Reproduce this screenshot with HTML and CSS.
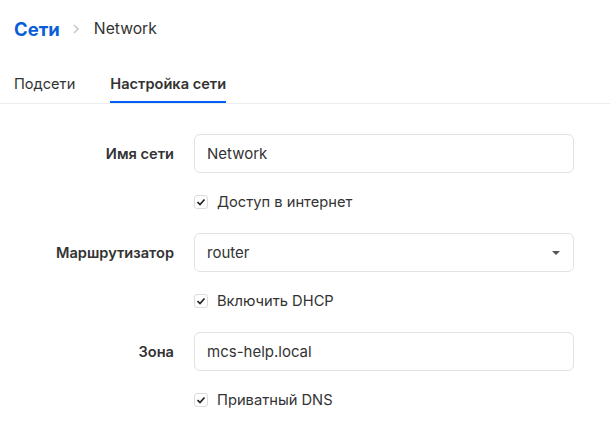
FILE: index.html
```html
<!DOCTYPE html>
<html lang="ru">
<head>
<meta charset="utf-8">
<link rel="stylesheet" href="styles.css">
</head>
<body>
<div class="page">
  <div class="breadcrumb">
    <span class="crumb-root">Сети</span>
    <svg class="crumb-sep" width="8" height="10" viewBox="0 0 8 10"><path d="M2 1l4 4-4 4" fill="none" stroke="#c8c8c8" stroke-width="1.6"/></svg>
    <span class="crumb-current">Network</span>
  </div>
  <div class="tabs">
    <div class="tab">Подсети</div>
    <div class="tab active">Настройка сети</div>
  </div>
  <form class="form">
    <div class="group">
      <label class="label">Имя сети</label>
      <div class="field"><span class="value">Network</span></div>
      <div class="check-row">
        <span class="checkbox"><svg width="10" height="8" viewBox="0 0 10 8"><path d="M1.5 4l2.5 2.5L8.5 1.5" fill="none" stroke="#222" stroke-width="1.7"/></svg></span>
        <span class="check-text">Доступ в интернет</span>
      </div>
    </div>
    <div class="group">
      <label class="label">Маршрутизатор</label>
      <div class="field select"><span class="value">router</span><span class="caret"></span></div>
      <div class="check-row">
        <span class="checkbox"><svg width="10" height="8" viewBox="0 0 10 8"><path d="M1.5 4l2.5 2.5L8.5 1.5" fill="none" stroke="#222" stroke-width="1.7"/></svg></span>
        <span class="check-text">Включить DHCP</span>
      </div>
    </div>
    <div class="group">
      <label class="label">Зона</label>
      <div class="field"><span class="value">mcs-help.local</span></div>
      <div class="check-row">
        <span class="checkbox"><svg width="10" height="8" viewBox="0 0 10 8"><path d="M1.5 4l2.5 2.5L8.5 1.5" fill="none" stroke="#222" stroke-width="1.7"/></svg></span>
        <span class="check-text">Приватный DNS</span>
      </div>
    </div>
  </form>
</div>
</body>
</html>
```

FILE: styles.css
```css
* { box-sizing: border-box; }
html, body { margin: 0; padding: 0; background: #fff; }
body {
  font-family: Inter, "Noto Sans", sans-serif;
  color: #333;
  width: 610px;
  height: 429px;
  overflow: hidden;
}
.breadcrumb {
  display: flex;
  align-items: center;
  height: 24px;
  margin-top: 17px;
  padding-left: 14px;
}
.crumb-root {
  font-size: 18.5px;
  font-weight: 700;
  color: #0a5fd8;
  line-height: 24px;
}
.crumb-sep { margin: 0 14px 0 12px; }
.crumb-current {
  font-size: 15.7px;
  color: #333;
  line-height: 24px;
}
.tabs {
  display: flex;
  gap: 35px;
  margin-top: 33px;
  padding-left: 14px;
  border-bottom: 1px solid #ececec;
}
.tab {
  font-size: 14.6px;
  line-height: 20px;
  padding-bottom: 7px;
  border-bottom: 2px solid transparent;
  color: #333;
}
.tab.active {
  font-weight: 600;
  border-bottom-color: #005ff9;
}
.form {
  padding: 30px 36px 0 14px;
  margin: 0;
}
.group {
  display: grid;
  grid-template-columns: 160px 1fr;
  column-gap: 20px;
  padding-bottom: 20px;
}
.label {
  font-size: 14.6px;
  font-weight: 600;
  color: #333;
  text-align: right;
  align-self: center;
}
.field {
  height: 39px;
  border: 1px solid #e2e2e2;
  border-radius: 6px;
  display: flex;
  align-items: center;
  padding: 0 13px 0 12px;
  font-size: 15px;
  color: #333;
}
.select { justify-content: space-between; }
.caret {
  width: 0;
  height: 0;
  border-left: 4px solid transparent;
  border-right: 4px solid transparent;
  border-top: 4px solid #555;
}
.check-row {
  grid-column: 2;
  display: flex;
  align-items: center;
  height: 22px;
  margin-top: 18px;
}
.checkbox {
  width: 14px;
  height: 14px;
  border: 1px solid #dcdcdc;
  border-radius: 3px;
  display: flex;
  align-items: center;
  justify-content: center;
  margin-right: 9px;
}
.check-text {
  font-size: 14.7px;
  color: #333;
}
```
